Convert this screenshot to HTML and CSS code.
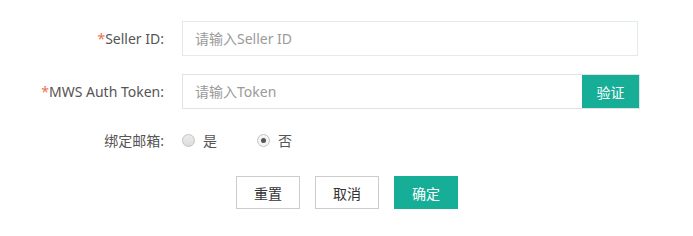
FILE: index.html
```html
<!DOCTYPE html>
<html lang="zh-CN">
<head>
    <meta charset="UTF-8">
    <title>绑定店铺</title>
    <link rel="stylesheet" href="styles.css">
</head>
<body>
    <form class="bind-form">
        <div class="form-row">
            <label class="form-label"><span class="req">*</span>Seller ID:</label>
            <div class="form-field">
                <input type="text" class="text-input seller-input" placeholder="请输入Seller ID">
            </div>
        </div>

        <div class="form-row">
            <label class="form-label"><span class="req">*</span>MWS Auth Token:</label>
            <div class="form-field input-group">
                <input type="text" class="text-input token-input" placeholder="请输入Token">
                <button type="button" class="verify-btn">验证</button>
            </div>
        </div>

        <div class="form-row radio-row">
            <label class="form-label">绑定邮箱:</label>
            <div class="form-field radios">
                <span class="radio"><i class="dot"></i>是</span>
                <span class="radio checked"><i class="dot"></i>否</span>
            </div>
        </div>

        <div class="actions">
            <button type="button" class="btn">重置</button>
            <button type="button" class="btn">取消</button>
            <button type="button" class="btn btn-primary">确定</button>
        </div>
    </form>
</body>
</html>
```

FILE: styles.css
```css
body {
    margin: 0;
    font-family: "Noto Sans", "Noto Sans CJK SC", sans-serif;
    font-size: 14px;
    color: #555;
    background: #fff;
}

.bind-form {
    padding-top: 21px;
}

.form-row {
    display: flex;
    align-items: center;
    margin-bottom: 18px;
}

.form-label {
    width: 164px;
    margin-right: 18px;
    text-align: right;
    color: #555;
}

.req {
    color: #f0704f;
}

.form-field {
    display: flex;
}

.text-input {
    box-sizing: border-box;
    height: 35px;
    padding: 0 12px;
    font-family: inherit;
    font-size: 14px;
    color: #555;
    outline: none;
}

.text-input::placeholder {
    color: #9a9a9a;
}

.seller-input {
    width: 456px;
    border: 1px solid #e3eaea;
}

.token-input {
    width: 400px;
    border: 1px solid #e2e2e2;
    border-right: none;
}

.verify-btn {
    width: 58px;
    height: 35px;
    border: 1px solid #e2e2e2;
    border-left: none;
    background: #17ae98;
    background-clip: padding-box;
    color: #fff;
    font-family: inherit;
    font-size: 14px;
    cursor: pointer;
}

.radio-row {
    margin-top: 20px;
    margin-bottom: 0;
    height: 22px;
}

.radios {
    align-items: center;
}

.radio {
    display: flex;
    align-items: center;
    width: 75px;
    color: #555;
}

.dot {
    box-sizing: border-box;
    width: 13px;
    height: 13px;
    margin-right: 8px;
    border: 1px solid #c3c3c3;
    border-radius: 50%;
    background: linear-gradient(#ececec, #dcdcdc);
    position: relative;
}

.radio.checked .dot {
    background: #f4f4f4;
}

.radio.checked .dot::after {
    content: "";
    position: absolute;
    left: 3px;
    top: 3px;
    width: 5px;
    height: 5px;
    border-radius: 50%;
    background: #555;
}

.actions {
    display: flex;
    gap: 15px;
    margin-top: 25px;
    padding-left: 236px;
}

.btn {
    box-sizing: border-box;
    width: 64px;
    height: 33px;
    border: 1px solid #ccc;
    background: #fff;
    color: #333;
    font-family: inherit;
    font-size: 14px;
    cursor: pointer;
}

.btn-primary {
    border-color: #17ae98;
    background: #17ae98;
    color: #fff;
}
```
